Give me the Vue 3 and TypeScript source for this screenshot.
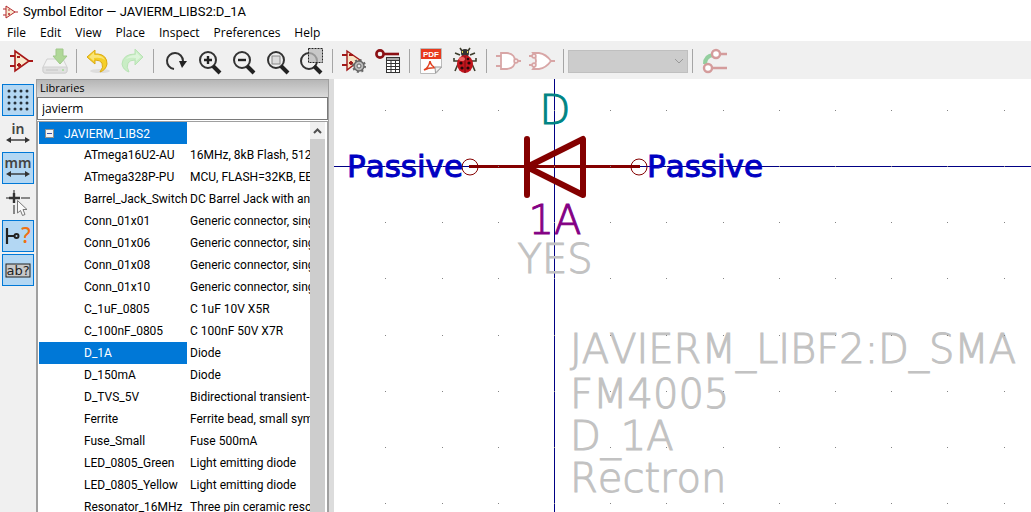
<script setup lang="ts">
import { ref } from 'vue'

interface LibraryPart {
  name: string
  description: string
}

const filter = ref('javierm')
const selected = ref('D_1A')
const expanded = ref(true)

const menus: string[] = ['File', 'Edit', 'View', 'Place', 'Inspect', 'Preferences', 'Help']

const parts: LibraryPart[] = [
  { name: 'ATmega16U2-AU', description: '16MHz, 8kB Flash, 512B SRAM' },
  { name: 'ATmega328P-PU', description: 'MCU, FLASH=32KB, EEPROM=1KB' },
  { name: 'Barrel_Jack_Switch', description: 'DC Barrel Jack with an internal switch' },
  { name: 'Conn_01x01', description: 'Generic connector, single row' },
  { name: 'Conn_01x06', description: 'Generic connector, single row' },
  { name: 'Conn_01x08', description: 'Generic connector, single row' },
  { name: 'Conn_01x10', description: 'Generic connector, single row' },
  { name: 'C_1uF_0805', description: 'C 1uF 10V X5R' },
  { name: 'C_100nF_0805', description: 'C 100nF 50V X7R' },
  { name: 'D_1A', description: 'Diode' },
  { name: 'D_150mA', description: 'Diode' },
  { name: 'D_TVS_5V', description: 'Bidirectional transient-voltage suppressor' },
  { name: 'Ferrite', description: 'Ferrite bead, small symbol' },
  { name: 'Fuse_Small', description: 'Fuse 500mA' },
  { name: 'LED_0805_Green', description: 'Light emitting diode' },
  { name: 'LED_0805_Yellow', description: 'Light emitting diode' },
  { name: 'Resonator_16MHz', description: 'Three pin ceramic resonator' },
]

// Grid points around the symbol origin, in canvas units.
const gridStep = 56.2
const gridPoints: { x: number; y: number }[] = []
for (let row = -1; row <= 14; row++) {
  for (let col = -3; col <= 28; col++) {
    gridPoints.push({ x: Math.round(col * gridStep), y: Math.round(row * gridStep) })
  }
}

const fields = [
  { text: 'JAVIERM_LIBF2:D_SMA', y: 197 },
  { text: 'FM4005', y: 242 },
  { text: 'D_1A', y: 284 },
  { text: 'Rectron', y: 326 },
]
</script>

<template>
  <div class="window">
    <header class="titlebar">
      <svg class="app-icon" viewBox="0 0 16 16" aria-hidden="true">
        <path d="M4 2 L13 8 L4 14 Z" fill="#f8ead0" stroke="#b4282d" />
        <path d="M1 5H4M1 11H4M13 8H16M6 6H8M6 10H8M7 9V11" fill="none" stroke="#b4282d" />
      </svg>
      <h1>Symbol Editor — JAVIERM_LIBS2:D_1A</h1>
    </header>

    <nav class="menubar">
      <button v-for="menu in menus" :key="menu" type="button">{{ menu }}</button>
    </nav>

    <div class="toolbar" role="toolbar" aria-label="Main">
      <button type="button" aria-label="New symbol">
        <svg viewBox="0 0 28 28">
          <path d="M8 4 L22 14 L8 24 Z" fill="#f8e8cc" stroke="#a81818" stroke-width="1.6" />
          <path d="M3 9H8M3 19H8M22 14H26M10 10H13M10 18H14M12 16V20" fill="none" stroke="#a81818" stroke-width="1.8" />
        </svg>
      </button>
      <button type="button" aria-label="Save" disabled>
        <svg viewBox="0 0 28 28">
          <path d="M6 12H22L26 20V24Q26 26 24 26H4Q2 26 2 24V20Z" fill="#f2f2f2" stroke="#d0d0d0" />
          <path d="M2 20H26V24Q26 26 24 26H4Q2 26 2 24Z" fill="#e0e0e0" stroke="#d0d0d0" />
          <path d="M5 23H17" stroke="#c4c4c4" />
          <circle cx="22" cy="23" r="1" fill="#a5dc9a" />
          <path d="M15 2H22V9H26L19 17L12 9H15Z" fill="#b0d898" stroke="#a0c88a" />
        </svg>
      </button>
      <span class="separator"></span>
      <button type="button" aria-label="Undo">
        <svg viewBox="0 0 28 28">
          <ellipse cx="16" cy="24" rx="10" ry="2" fill="#ddd" />
          <path d="M3 10L11 3V7H14Q23 8 23 17Q22 23 16 25Q20 20 18 16Q16 13 11 13V17Z" fill="#f5cf28" stroke="#dba912" />
          <path d="M5 10L10 5V8H14Q19 9 21 13Q17 10 10 11V14Z" fill="#fae578" />
        </svg>
      </button>
      <button type="button" aria-label="Redo" disabled>
        <svg viewBox="0 0 28 28">
          <path d="M25 10L17 2V7Q5 7 4 17Q5 23 11 25Q8 20 10 16Q12 13 17 13V18Z" fill="#c9edc5" stroke="#b8e3b4" />
          <path d="M23 10L18 5V8Q11 8 8 12Q12 10 18 11V14Z" fill="#ddf5da" />
        </svg>
      </button>
      <span class="separator"></span>
      <button type="button" aria-label="Refresh">
        <svg viewBox="0 0 28 28">
          <path d="M13 22A8 8 0 1 1 22 14" fill="none" stroke="#333" stroke-width="2" />
          <path d="M18 14H26L21 21Z" fill="#222" />
        </svg>
      </button>
      <button type="button" aria-label="Zoom in">
        <svg viewBox="0 0 28 28">
          <circle cx="13" cy="13" r="8" fill="#f0f0f0" stroke="#333" stroke-width="2" />
          <path d="M18 19L25 26" stroke="#222" stroke-width="4" />
          <path d="M9 13H17M13 9V17" stroke="#222" stroke-width="2.4" />
        </svg>
      </button>
      <button type="button" aria-label="Zoom out">
        <svg viewBox="0 0 28 28">
          <circle cx="13" cy="13" r="8" fill="#f0f0f0" stroke="#333" stroke-width="2" />
          <path d="M18 19L25 26" stroke="#222" stroke-width="4" />
          <path d="M9 13H17" stroke="#222" stroke-width="2.4" />
        </svg>
      </button>
      <button type="button" aria-label="Zoom to fit">
        <svg viewBox="0 0 28 28">
          <circle cx="13" cy="13" r="8" fill="#f0f0f0" stroke="#333" stroke-width="2" />
          <rect x="9" y="9" width="8" height="8" fill="#ddd" stroke="#888" />
          <path d="M18 19L25 26" stroke="#222" stroke-width="4" />
        </svg>
      </button>
      <button type="button" aria-label="Zoom to selection">
        <svg viewBox="0 0 28 28">
          <circle cx="12" cy="14" r="8" fill="#f0f0f0" stroke="#333" stroke-width="2" />
          <rect x="11.5" y="1.5" width="14" height="14" fill="#bbb" fill-opacity="0.75" stroke="#222" stroke-dasharray="2 1" />
          <path d="M17 19L24 26" stroke="#222" stroke-width="4" />
        </svg>
      </button>
      <span class="separator"></span>
      <button type="button" aria-label="Symbol properties">
        <svg viewBox="0 0 28 28">
          <path d="M7 4L20 13L7 23Z" fill="#f8e4c4" stroke="#a01818" stroke-width="1.4" />
          <path d="M2 8H7M2 18H7M9 8H13M9 16H13M11 14V18" fill="none" stroke="#a01818" stroke-width="1.8" />
          <circle cx="19" cy="19" r="5" fill="#bbb" stroke="#666" stroke-width="1.4" />
          <circle cx="19" cy="19" r="6" fill="none" stroke="#666" stroke-width="2" stroke-dasharray="2 2.7" />
          <circle cx="19" cy="19" r="2" fill="#eee" stroke="#666" />
        </svg>
      </button>
      <button type="button" aria-label="Pin table">
        <svg viewBox="0 0 28 28">
          <circle cx="6" cy="7" r="3.6" fill="#f4f4f4" stroke="#8b1014" stroke-width="2.6" />
          <path d="M10 7H25" stroke="#8b1014" stroke-width="2.6" />
          <rect x="11" y="10" width="16" height="17" fill="#eee" />
          <rect x="12.5" y="10.5" width="13" height="15" fill="#fff" stroke="#333" />
          <path d="M13 11H25V13H13Z" fill="#aaa" />
          <path d="M12 13.5H26M12 16.5H26M12 19.5H26M12 22.5H26M17 13V26M21.5 13V26" stroke="#333" />
        </svg>
      </button>
      <span class="separator"></span>
      <button type="button" aria-label="Show datasheet">
        <svg viewBox="0 0 28 28">
          <path d="M3.5 1.5H24.5V20L19 26.5H3.5Z" fill="#fdfdfd" stroke="#bbb" />
          <rect x="4" y="2" width="20" height="10" fill="#e8391d" />
          <text x="14" y="10" text-anchor="middle" class="pdf-label">PDF</text>
          <path d="M7 23Q12 20 13 14Q14 20 20 21Q13 20 7 23Z" fill="none" stroke="#e0401f" stroke-width="1.5" />
          <path d="M24.5 20L18 20L18.5 26Z" fill="#eee" stroke="#999" />
        </svg>
      </button>
      <button type="button" aria-label="Electrical rules check">
        <svg viewBox="0 0 28 28">
          <path d="M9 8L4 6M7 14H3L3 11M7 17L4 24M19 8L24 6M21 14H25L25 11M21 17L24 24M11 4L9 1M17 4L19 1" fill="none" stroke="#3d3d2d" stroke-width="1.6" />
          <circle cx="14" cy="6" r="4" fill="#333" />
          <path d="M11 5H12M16 5H17" stroke="#e8d44c" stroke-width="2" />
          <ellipse cx="14" cy="17" rx="8" ry="9" fill="#c3141c" />
          <path d="M14 9V26" stroke="#701015" />
          <ellipse cx="11" cy="12" rx="3" ry="2" fill="#ee6565" />
          <g fill="#260809">
            <circle cx="10" cy="16" r="1.6" />
            <circle cx="18" cy="16" r="1.6" />
            <circle cx="11" cy="21" r="1.6" />
            <circle cx="17" cy="21" r="1.6" />
            <circle cx="17" cy="12" r="1.3" />
          </g>
        </svg>
      </button>
      <span class="separator"></span>
      <button type="button" aria-label="Standard body style" disabled>
        <svg viewBox="0 0 28 28" fill="#fff" stroke="#d8a6a6" stroke-width="1.8">
          <path d="M7 6H13Q21 7 21 14Q21 21 13 22H7Z" />
          <circle cx="22" cy="14" r="1.8" />
          <path d="M2 9H7M2 19H7M24 14H27" />
        </svg>
      </button>
      <button type="button" aria-label="Alternate body style" disabled>
        <svg viewBox="0 0 28 28" fill="#fff" stroke="#d8a6a6" stroke-width="1.8">
          <path d="M5 6H11Q18 7 23 14Q18 21 11 22H5Q11 14 5 6Z" />
          <circle cx="6" cy="9" r="1.8" />
          <circle cx="6" cy="18" r="1.8" />
          <path d="M1 9H4M1 18H4M23 14H27" />
        </svg>
      </button>
      <span class="separator"></span>
      <div class="unit-select">
        <select aria-label="Unit" disabled></select>
        <svg viewBox="0 0 10 6" aria-hidden="true">
          <path d="M1 1L5 5L9 1" fill="none" stroke="#999" />
        </svg>
      </div>
      <span class="separator"></span>
      <button type="button" aria-label="Synchronized pin edit" disabled>
        <svg viewBox="0 0 28 28" fill="none">
          <path d="M5 17Q5 9 13 8" stroke="#94cf9f" stroke-width="4" />
          <circle cx="16" cy="7" r="4" fill="#fff" stroke="#d49c9c" stroke-width="2.4" />
          <circle cx="8" cy="21" r="4" fill="#fff" stroke="#d49c9c" stroke-width="2.4" />
          <path d="M20 7H27M12 21H27" stroke="#d49c9c" stroke-width="2.6" />
        </svg>
      </button>
    </div>

    <main class="workspace">
      <div class="side-tools" role="toolbar" aria-label="Display options">
        <button type="button" class="active" aria-label="Show grid">
          <svg viewBox="0 0 32 32">
            <path
              d="M7 7H26M7 13H26M7 19H26M7 25H26"
              stroke="#26323c"
              stroke-width="3"
              stroke-linecap="round"
              stroke-dasharray="0 6"
            />
          </svg>
        </button>
        <button type="button" aria-label="Inches">
          <span class="unit">in</span>
          <svg class="arrows" viewBox="0 0 24 6">
            <path d="M2 3H22" stroke="#333" stroke-width="1.4" />
            <path d="M5 0L0 3L5 6ZM19 0L24 3L19 6Z" fill="#333" />
          </svg>
        </button>
        <button type="button" class="active" aria-label="Millimeters">
          <span class="unit">mm</span>
          <svg class="arrows" viewBox="0 0 24 6">
            <path d="M2 3H22" stroke="#333" stroke-width="1.4" />
            <path d="M5 0L0 3L5 6ZM19 0L24 3L19 6Z" fill="#333" />
          </svg>
        </button>
        <button type="button" aria-label="Full-window crosshair">
          <svg viewBox="0 0 32 32">
            <path d="M4 12H8M19 12H28M12 4V8M12 19V28" stroke="#888" stroke-width="2" />
            <path d="M7 12H18M12 7V17" stroke="#333" stroke-width="2.4" />
            <path d="M15.5 14.5V27L18.5 24.5L20.5 29.5L23 28.5L21 23.5H25Z" fill="#fafafa" stroke="#777" />
          </svg>
        </button>
        <button type="button" class="active" aria-label="Show pin electrical types">
          <svg viewBox="0 0 32 32">
            <path d="M5 8V24M5 16H12" stroke="#222" stroke-width="2.2" />
            <circle cx="14.5" cy="16" r="2" fill="none" stroke="#222" stroke-width="2" />
            <text x="24" y="23" text-anchor="middle" class="question">?</text>
          </svg>
        </button>
        <button type="button" class="active" aria-label="Show hidden fields">
          <svg viewBox="0 0 32 32">
            <rect x="4" y="10" width="24" height="13" fill="#c8c8c8" stroke="#222" />
            <text x="16" y="21" text-anchor="middle" class="field-label">ab?</text>
          </svg>
        </button>
      </div>

      <section class="libraries">
        <h2>Libraries</h2>
        <input v-model="filter" type="text" aria-label="Filter libraries" spellcheck="false" />
        <div class="tree">
          <table aria-label="Symbol libraries">
            <colgroup>
              <col class="name-column" />
              <col />
            </colgroup>
            <tbody>
              <tr class="library selected">
                <td>
                  <button type="button" :aria-expanded="expanded" aria-label="Toggle library" @click="expanded = !expanded"></button>
                  <span>JAVIERM_LIBS2</span>
                </td>
                <td></td>
              </tr>
              <template v-if="expanded">
                <tr
                  v-for="part in parts"
                  :key="part.name"
                  class="part"
                  :class="{ selected: part.name === selected }"
                  @click="selected = part.name"
                >
                  <td>{{ part.name }}</td>
                  <td>{{ part.description }}</td>
                </tr>
              </template>
            </tbody>
          </table>
          <div class="scrollbar">
            <button type="button" aria-label="Scroll up">
              <svg viewBox="0 0 9 6"><path d="M1 5L4.5 1.5L8 5" fill="none" stroke="#505050" stroke-width="2" /></svg>
            </button>
            <div class="thumb"></div>
          </div>
        </div>
      </section>

      <section class="canvas">
        <svg class="sheet" role="img" aria-label="Symbol D_1A">
          <g transform="translate(220 87)">
            <path class="axis" d="M-220 0.5H2000M0.5 -87V2000" />

            <g class="hidden-field">
              <text x="1" y="107" text-anchor="middle">YES</text>
              <text v-for="field in fields" :key="field.text" x="16" :y="field.y">{{ field.text }}</text>
            </g>
            <text class="reference" x="1" y="-42" text-anchor="middle">D</text>
            <text class="value" x="1" y="68" text-anchor="middle">1A</text>

            <g class="body">
              <path class="pin" d="M-85 0.5H86" />
              <path class="outline" d="M-27 -27V29M29 -27V29L-27 1Z" />
              <circle cx="-84" cy="1" r="8" />
              <circle cx="85" cy="1" r="8" />
            </g>

            <g class="pin-type">
              <text x="-207" y="11">Passive</text>
              <text x="93" y="11">Passive</text>
            </g>

            <rect v-for="(point, i) in gridPoints" :key="i" class="dot" :x="point.x" :y="point.y" width="1" height="1" />
          </g>
        </svg>
      </section>
    </main>
  </div>
</template>

<style>
html,
body,
#app {
  height: 100%;
}
body {
  margin: 0;
  overflow: hidden;
}
</style>

<style scoped>
.window {
  display: flex;
  flex-direction: column;
  height: 100%;
  overflow: hidden;
  background: #fff;
  color: #000;
  font: 12px/16px 'Open Sans', 'Noto Sans', sans-serif;
}
button {
  padding: 0;
  border: 0;
  background: none;
  color: inherit;
  font: inherit;
}
h1,
h2 {
  margin: 0;
  font: inherit;
}
svg {
  display: block;
}

.titlebar {
  display: flex;
  flex: none;
  align-items: center;
  gap: 5px;
  height: 24px;
  padding-left: 2px;
}
.titlebar h1 {
  font-family: Roboto, 'Open Sans', sans-serif;
  font-size: 13px;
}
.app-icon {
  width: 16px;
  height: 16px;
}
.menubar {
  display: flex;
  flex: none;
  gap: 14px;
  height: 17px;
  padding-left: 7px;
}

.toolbar {
  display: flex;
  flex: none;
  align-items: center;
  box-sizing: border-box;
  height: 38px;
  padding: 2px 0 0 4px;
  background: #f0f0f0;
}
.toolbar button {
  display: grid;
  place-items: center;
  width: 34px;
  height: 34px;
}
.toolbar button svg {
  width: 28px;
  height: 28px;
}
.separator {
  width: 1px;
  height: 24px;
  margin: 0 4px;
  background: #a5a5a5;
}
.unit-select {
  display: grid;
  align-items: center;
}
.unit-select > * {
  grid-area: 1 / 1;
}
.unit-select select {
  width: 120px;
  height: 23px;
  border: 1px solid #bfbfbf;
  border-radius: 0;
  background: #ccc;
  appearance: none;
  opacity: 1;
}
.unit-select svg {
  justify-self: end;
  width: 10px;
  height: 6px;
  margin-right: 4px;
}
.pdf-label {
  fill: #fff;
  font: bold 8px 'Liberation Sans', sans-serif;
}

.workspace {
  display: flex;
  flex: 1;
  min-height: 0;
}
.side-tools {
  display: flex;
  flex: none;
  flex-direction: column;
  align-items: center;
  gap: 2px;
  width: 36px;
  padding-top: 5px;
  background: #f0f0f0;
}
.side-tools button {
  display: flex;
  flex-direction: column;
  align-items: center;
  justify-content: center;
  box-sizing: border-box;
  width: 32px;
  height: 32px;
  border: 1px solid transparent;
}
.side-tools button.active {
  border-color: #0078d7;
  background: #b3d7f3;
}
.side-tools svg {
  flex: none;
  width: 32px;
  height: 32px;
}
.side-tools .arrows {
  width: 24px;
  height: 6px;
  margin-bottom: 4px;
}
.unit {
  color: #444;
  font: 600 14px/16px 'Noto Sans', sans-serif;
}
.question {
  fill: #f07010;
  font: 500 21px 'Noto Sans', sans-serif;
}
.field-label {
  fill: #222;
  font: 13px 'DejaVu Sans', sans-serif;
}

.libraries {
  display: flex;
  flex: none;
  flex-direction: column;
  box-sizing: border-box;
  width: 293px;
  border: solid #a0a0a0;
  border-width: 1px 1px 0;
}
.libraries h2 {
  flex: none;
  height: 17px;
  padding-left: 3px;
  background: linear-gradient(#b6b6b6, #dadada);
  font-size: 11px;
  line-height: 15px;
}
.libraries input {
  flex: none;
  box-sizing: border-box;
  width: 100%;
  height: 23px;
  padding: 0 4px;
  border: 1px solid #7a7a7a;
  border-radius: 0;
  outline: 0;
  background: #fff;
  color: #000;
  font: inherit;
}
.tree {
  display: flex;
  flex: 1;
  min-height: 0;
  margin-top: 1px;
  padding: 0 2px 0 1px;
  overflow: hidden;
  border: solid #a0a0a0;
  border-width: 1px 1px 0;
}
table {
  flex: 1;
  width: 0;
  height: 0;
  table-layout: fixed;
  border-collapse: collapse;
  font-family: Roboto, 'Open Sans', sans-serif;
}
.name-column {
  width: 148px;
}
td {
  height: 22px;
  padding: 0 0 0 3px;
  overflow: hidden;
  white-space: nowrap;
}
.part td:first-child {
  padding-left: 45px;
}
.selected td:first-child {
  background: #0078d7;
  color: #fff;
}
.library td:first-child {
  padding-left: 6px;
}
.library button {
  display: inline-block;
  width: 9px;
  height: 9px;
  margin-right: 10px;
  border: 1px solid #919191;
  background: linear-gradient(#3c50a0, #3c50a0) center / 5px 1px no-repeat #f4f4f4;
  vertical-align: middle;
}
.library span {
  vertical-align: middle;
}
.scrollbar {
  display: flex;
  flex: none;
  flex-direction: column;
  width: 15px;
  background: #f0f0f0;
}
.scrollbar button {
  display: grid;
  flex: none;
  place-items: center;
  height: 17px;
}
.scrollbar svg {
  width: 9px;
  height: 6px;
}
.thumb {
  flex: 1;
  background: #cdcdcd;
}

.canvas {
  flex: 1;
  min-width: 0;
  overflow: hidden;
  border-left: 5px solid #dcdcdc;
}
.sheet {
  width: 100%;
  height: 100%;
}
.sheet text {
  font: 200 40px 'DejaVu Sans', sans-serif;
  font-kerning: none;
  stroke-width: 1px;
}
.axis {
  fill: none;
  stroke: #000084;
}
.dot {
  fill: #848484;
}
.hidden-field text {
  fill: #c2c2c2;
  stroke: #c2c2c2;
}
.sheet .reference {
  fill: #008484;
  stroke: #008484;
}
.sheet .value {
  fill: #840084;
  stroke: #840084;
}
.body {
  fill: none;
  stroke: #840000;
}
.pin {
  stroke-width: 3px;
}
.outline {
  stroke-width: 6px;
  stroke-linecap: round;
  stroke-linejoin: round;
}
.sheet .pin-type text {
  fill: #0000c2;
  stroke: #0000c2;
  font-size: 31px;
  font-weight: 400;
}
</style>
